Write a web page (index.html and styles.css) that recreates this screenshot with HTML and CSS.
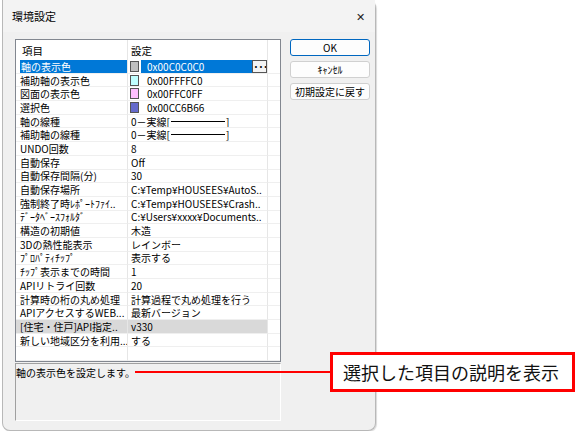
FILE: index.html
```html
<!DOCTYPE html>
<html lang="ja">
<head>
  <meta charset="UTF-8" />
  <title>環境設定</title>
  <link rel="stylesheet" href="styles.css">
</head>
<body>
  <div class="dialog">
    <div class="titlebar">
      <span class="title">環境設定</span>
      <span class="close">✕</span>
    </div>

    <div class="dialog-body">
      <div class="left">
        <!-- Property list -->
        <div class="list">
          <div class="cell head name">項目</div>
          <div class="cell head value">設定</div>
          <div class="cell head fill"></div>

          <div class="cell name"><span class="sel">軸の表示色</span></div>
          <div class="cell value color">
            <span class="swatch" style="background:#c0c0c0"></span>
            <span class="sel">0x00C0C0C0</span>
            <span class="more">···</span>
          </div>
          <div class="cell fill"></div>

          <div class="cell name">補助軸の表示色</div>
          <div class="cell value color"><span class="swatch" style="background:#c0ffff"></span><span class="txt">0x00FFFFC0</span></div>
          <div class="cell fill"></div>

          <div class="cell name">図面の表示色</div>
          <div class="cell value color"><span class="swatch" style="background:#ffc0ff"></span><span class="txt">0x00FFC0FF</span></div>
          <div class="cell fill"></div>

          <div class="cell name">選択色</div>
          <div class="cell value color"><span class="swatch" style="background:#666bcc"></span><span class="txt">0x00CC6B66</span></div>
          <div class="cell fill"></div>

          <div class="cell name">軸の線種</div>
          <div class="cell value">0－実線[<span class="rule"></span>]</div>
          <div class="cell fill"></div>

          <div class="cell name">補助軸の線種</div>
          <div class="cell value">0－実線[<span class="rule"></span>]</div>
          <div class="cell fill"></div>

          <div class="cell name">UNDO回数</div>
          <div class="cell value">8</div>
          <div class="cell fill"></div>

          <div class="cell name">自動保存</div>
          <div class="cell value">Off</div>
          <div class="cell fill"></div>

          <div class="cell name">自動保存間隔(分)</div>
          <div class="cell value">30</div>
          <div class="cell fill"></div>

          <div class="cell name">自動保存場所</div>
          <div class="cell value">C:¥Temp¥HOUSEES¥AutoS..</div>
          <div class="cell fill"></div>

          <div class="cell name">強制終了時ﾚﾎﾟｰﾄﾌｧｲ..</div>
          <div class="cell value">C:¥Temp¥HOUSEES¥Crash..</div>
          <div class="cell fill"></div>

          <div class="cell name">ﾃﾞｰﾀﾍﾞｰｽﾌｫﾙﾀﾞ</div>
          <div class="cell value">C:¥Users¥xxxx¥Documents..</div>
          <div class="cell fill"></div>

          <div class="cell name">構造の初期値</div>
          <div class="cell value">木造</div>
          <div class="cell fill"></div>

          <div class="cell name">3Dの熱性能表示</div>
          <div class="cell value">レインボー</div>
          <div class="cell fill"></div>

          <div class="cell name">ﾌﾟﾛﾊﾟﾃｨﾁｯﾌﾟ</div>
          <div class="cell value">表示する</div>
          <div class="cell fill"></div>

          <div class="cell name">ﾁｯﾌﾟ表示までの時間</div>
          <div class="cell value">1</div>
          <div class="cell fill"></div>

          <div class="cell name">APIリトライ回数</div>
          <div class="cell value">20</div>
          <div class="cell fill"></div>

          <div class="cell name">計算時の桁の丸め処理</div>
          <div class="cell value">計算過程で丸め処理を行う</div>
          <div class="cell fill"></div>

          <div class="cell name">APIアクセスするWEB...</div>
          <div class="cell value">最新バージョン</div>
          <div class="cell fill"></div>

          <div class="cell name gray">[住宅・住戸]API指定..</div>
          <div class="cell value gray">v330</div>
          <div class="cell fill"></div>

          <div class="cell name">新しい地域区分を利用...</div>
          <div class="cell value">する</div>
          <div class="cell fill"></div>

          <div class="cell name"></div>
          <div class="cell value"></div>
          <div class="cell fill"></div>
        </div>

        <!-- Description -->
        <div class="desc">軸の表示色を設定します。</div>
      </div>

      <div class="buttons">
        <button class="btn default">OK</button>
        <button class="btn">ｷｬﾝｾﾙ</button>
        <button class="btn">初期設定に戻す</button>
      </div>
    </div>
  </div>

  <!-- Annotation -->
  <div class="callout-line"></div>
  <div class="callout">選択した項目の説明を表示</div>
</body>
</html>
```

FILE: styles.css
```css
body {
  margin: 0;
  background-color: #ffffff;
  font-family: "Noto Sans CJK JP", "Noto Sans", sans-serif;
  color: #000;
}

.dialog {
  margin-left: 2px;
  width: 374px;
  height: 431px;
  box-sizing: border-box;
  background-color: #f0f0f0;
  border: 1px solid #b8b8b8;
  border-top: none;
  border-radius: 0 8px 8px 8px;
  box-shadow: 1px 1px 1px rgba(0, 0, 0, 0.15);
}

.titlebar {
  height: 32px;
  display: flex;
  align-items: center;
  justify-content: space-between;
  padding: 0 9px 0 9px;
  background-color: #f3f3f3;
}

.title {
  font-size: 11px;
}

.close {
  font-size: 11px;
  color: #222;
  margin-right: 1px;
}

.dialog-body {
  display: flex;
  padding: 7px 5px 0 12px;
  gap: 9px;
}

.left {
  display: flex;
  flex-direction: column;
  gap: 1px;
}

.list {
  display: grid;
  grid-template-columns: 112px 140px 12px;
  grid-template-rows: 20px repeat(22, 13.7px);
  background-color: #fff;
  border: 1px solid #828790;
  font-size: 10px;
  line-height: 13px;
}

.cell {
  box-sizing: border-box;
  border-bottom: 1px solid #efefef;
  display: flex;
  align-items: center;
  white-space: nowrap;
  overflow: hidden;
}

.name,
.value {
  border-right: 1px solid #e6e6e6;
}

.name {
  padding-left: 4px;
}

.value {
  padding-left: 3px;
}

.head {
  border-bottom: none;
  font-size: 10.5px;
}

.head.name {
  padding-left: 6px;
}

.gray {
  background-color: #d9d9d9;
}

.sel {
  align-self: stretch;
  display: flex;
  align-items: center;
  background-color: #0078d7;
  color: #fff;
  flex: 1;
  padding-left: 1px;
}

.color {
  padding-left: 2px;
}

.color .sel {
  padding-left: 6px;
}

.swatch {
  width: 7px;
  height: 9px;
  border: 1px solid #555;
  margin-right: 2px;
  flex: none;
}

.txt {
  padding-left: 6px;
}

.more {
  width: 13px;
  height: 11px;
  border: 1px solid #555;
  background-color: #f4f4f4;
  font-size: 10px;
  line-height: 11px;
  letter-spacing: -1px;
  text-align: center;
  font-weight: bold;
  flex: none;
  overflow: hidden;
}

.rule {
  display: inline-block;
  width: 54px;
  height: 1px;
  background-color: #000;
  margin: 0 1px;
}

.desc {
  height: 58px;
  box-sizing: border-box;
  border-top: 1px solid #a0a0a0;
  border-left: 1px solid #a0a0a0;
  border-right: 1px solid #fff;
  border-bottom: 1px solid #fff;
  font-size: 10px;
  line-height: 14px;
  padding-top: 2px;
}

.buttons {
  display: flex;
  flex-direction: column;
  gap: 5px;
}

.btn {
  width: 80px;
  height: 17px;
  padding: 0;
  font-family: "Noto Sans CJK JP", sans-serif;
  font-size: 10px;
  line-height: 14px;
  background-color: #fdfdfd;
  border: 1px solid #d0d0d0;
  border-radius: 3px;
  color: #000;
}

.btn.default {
  border: 1px solid #0067c0;
}

.callout-line {
  position: absolute;
  left: 135px;
  top: 371px;
  width: 196px;
  height: 2px;
  background-color: #ff0000;
}

.callout {
  position: absolute;
  left: 330px;
  top: 352px;
  width: 245px;
  height: 40px;
  box-sizing: border-box;
  border: 3px solid #ff0000;
  background-color: #fff;
  font-size: 18px;
  line-height: 34px;
  padding-left: 10px;
  color: #111;
}
```
